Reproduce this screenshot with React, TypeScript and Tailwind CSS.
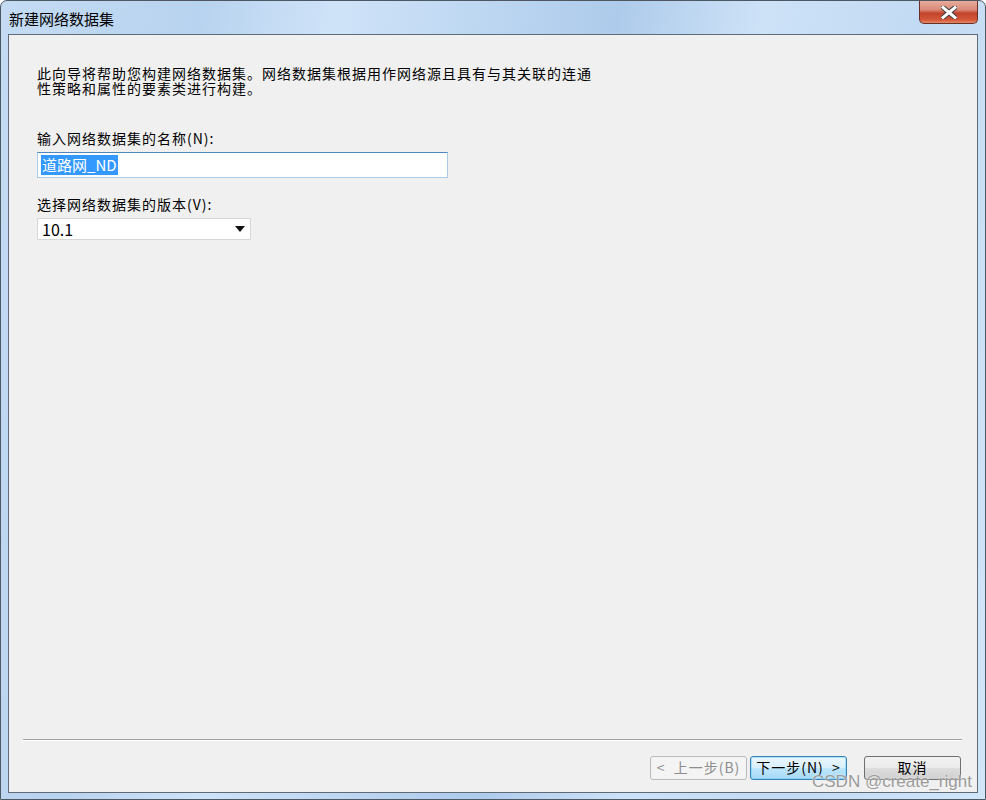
import React from "react";

const cjk = "font-['Noto_Sans_CJK_SC','Noto_Sans',sans-serif]";

const CloseGlyph = () => (
  <svg width="16" height="13" viewBox="0 0 16 13">
    <path d="M2 1.5 L14 11.5 M14 1.5 L2 11.5" stroke="#3b3b3b" strokeWidth="5" strokeLinecap="square" />
    <path d="M2 1.5 L14 11.5 M14 1.5 L2 11.5" stroke="#ffffff" strokeWidth="3" strokeLinecap="square" />
  </svg>
);

const Button = ({ label, kind }: { label: string; kind: "normal" | "disabled" | "focus" }) => {
  const look =
    kind === "disabled"
      ? "border-[#b8bcc0] bg-[#f4f4f4] text-[#8d8d8d]"
      : kind === "focus"
      ? "border-[#3c7fb1] bg-[linear-gradient(180deg,#eaf6fd_0%,#d9f0fc_48%,#bee6fd_52%,#a7d9f5_100%)] text-black shadow-[inset_0_0_0_1px_#48d0ff66]"
      : "border-[#707070] bg-[linear-gradient(180deg,#f2f2f2_0%,#ebebeb_48%,#dddddd_52%,#cfcfcf_100%)] text-black";
  return (
    <div
      className={`w-[97px] h-[24px] rounded-[3px] border flex items-center justify-center pb-[2px] text-[14px] tracking-[1px] leading-none whitespace-pre ${cjk} ${look}`}
    >
      {label}
    </div>
  );
};

export default function App() {
  return (
    <div className="w-[986px] h-[800px] relative overflow-hidden">
      <div className="w-full h-full flex flex-col rounded-t-[7px] border border-[#4d5863] bg-[linear-gradient(100deg,#c4dbf3_0%,#b8d3ef_18%,#cfe3f8_30%,#bcd6f1_44%,#aecbeb_55%,#cde2f7_68%,#c2daf3_82%,#d2e6f9_100%)]">
        {/* title bar */}
        <div className="h-[33px] flex items-start justify-between">
          <div className={`pl-[8px] pt-[8px] text-[15px] leading-[20px] text-black ${cjk}`}>新建网络数据集</div>
          <div className="mr-[7px] w-[59px] h-[23px] rounded-b-[5px] border border-t-0 border-[#6a2f28] bg-[linear-gradient(180deg,#e8ab9c_0%,#d98a77_40%,#c3442c_55%,#d45638_85%,#e28a68_100%)] flex items-center justify-center">
            <CloseGlyph />
          </div>
        </div>

        {/* client area */}
        <div className="flex-1 mx-[7px] mb-[6px] border border-[#5e6b78] bg-[#f0f0f0] flex flex-col">
          <div className={`pl-[28px] pt-[31px] text-[14px] tracking-[1px] text-black ${cjk}`}>
            <p className="leading-[15px]">
              此向导将帮助您构建网络数据集。网络数据集根据用作网络源且具有与其关联的连通
              <br />
              性策略和属性的要素类进行构建。
            </p>

            <p className="mt-[35px] leading-[14px]">输入网络数据集的名称(N):</p>
            <div className="mt-[7px] w-[411px] h-[26px] bg-white border border-[#a9cbec] border-t-[#4f86bb] flex items-center pl-[3px] tracking-normal">
              <span className="bg-[#3399ff] text-white text-[15px] leading-[20px] px-[1px]">道路网_ND</span>
            </div>

            <p className="mt-[19px] leading-[14px]">选择网络数据集的版本(V):</p>
            <div className="mt-[7px] w-[214px] h-[22px] bg-white border border-[#d7d7d7] flex items-center justify-between pl-[4px] pr-[5px] tracking-normal">
              <span className="text-[16px] leading-none">10.1</span>
              <svg width="10" height="6" viewBox="0 0 10 6">
                <path d="M0 0 H10 L5 6 Z" fill="#111" />
              </svg>
            </div>
          </div>

          <div className="flex-1" />

          <div className="ml-[14px] mr-[15px] border-t border-[#a0a0a0] border-b border-b-white" />

          <div className="mt-[15px] mb-[12px] pr-[16px] flex justify-end items-center">
            <Button label="<  上一步(B)" kind="disabled" />
            <div className="w-[3px]" />
            <Button label="下一步(N)  >" kind="focus" />
            <div className="w-[17px]" />
            <Button label="取消" kind="normal" />
          </div>
        </div>
      </div>

      {/* watermark */}
      <div className="absolute left-[812px] top-[772px] text-[17px] leading-[20px] text-[#9a9a9a] font-['Liberation_Sans',Arial,sans-serif] [text-shadow:0_0_2px_#ffffff]">
        CSDN @create_right
      </div>
    </div>
  );
}
